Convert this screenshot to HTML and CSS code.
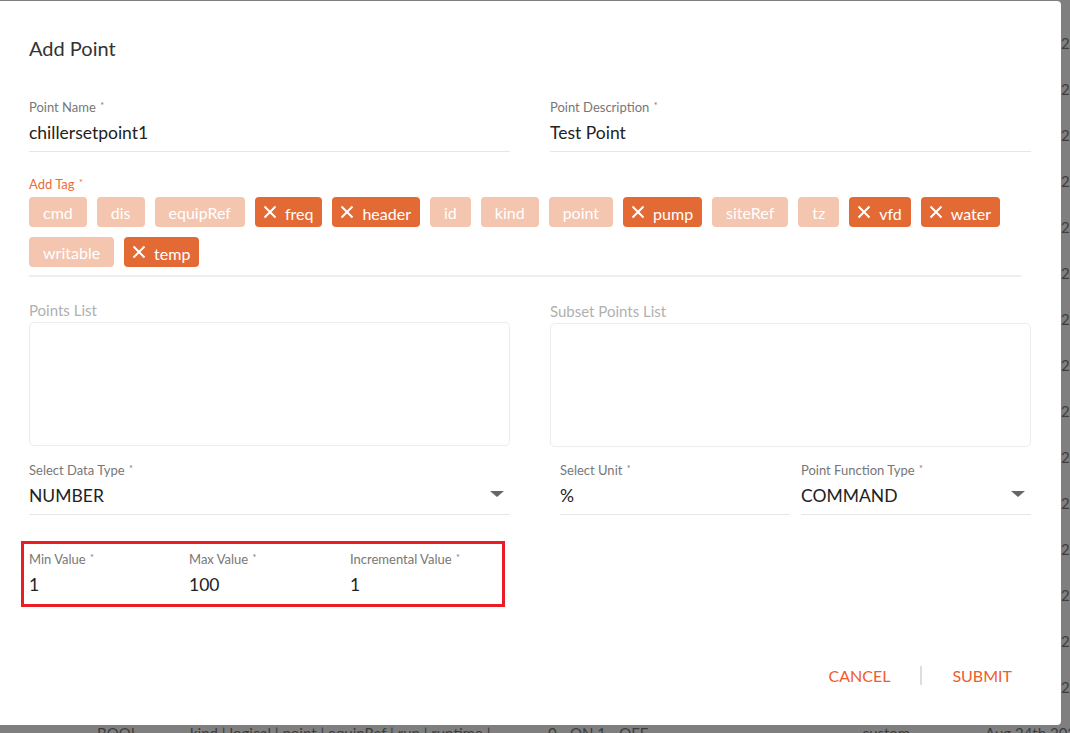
FILE: index.html
```html
<!DOCTYPE html>
<html lang="en">
<head>
    <meta charset="UTF-8">
    <meta name="viewport" content="width=device-width, initial-scale=1.0">
    <title>Add Point</title>
    <link rel="stylesheet" href="styles.css">
</head>
<body>
<div class="backdrop">
    <div class="bg-row"><span class="bg-date">2023</span></div>
    <div class="bg-row"><span class="bg-date">2023</span></div>
    <div class="bg-row"><span class="bg-date">2023</span></div>
    <div class="bg-row"><span class="bg-date">2023</span></div>
    <div class="bg-row"><span class="bg-date">2023</span></div>
    <div class="bg-row"><span class="bg-date">2023</span></div>
    <div class="bg-row"><span class="bg-date">2023</span></div>
    <div class="bg-row"><span class="bg-date">2023</span></div>
    <div class="bg-row"><span class="bg-date">2023</span></div>
    <div class="bg-row"><span class="bg-date">2023</span></div>
    <div class="bg-row"><span class="bg-date">2023</span></div>
    <div class="bg-row"><span class="bg-date">2023</span></div>
    <div class="bg-row"><span class="bg-date">2023</span></div>
    <div class="bg-row"><span class="bg-date">2023</span></div>
    <div class="bg-row"><span class="bg-date">2023</span></div>
    <div class="bg-row last"><span>BOOL</span><span>kind | logical | point | equipRef | run | runtime |</span><span>0 - ON 1 - OFF</span><span>custom</span><span>Aug 24th 2023</span></div>
</div>

<div class="dialog">
    <h2 class="dialog-title">Add Point</h2>

    <div class="row">
        <div class="field">
            <label>Point Name <sup>*</sup></label>
            <div class="value">chillersetpoint1</div>
        </div>
        <div class="field">
            <label>Point Description <sup>*</sup></label>
            <div class="value">Test Point</div>
        </div>
    </div>

    <div class="tags">
        <label class="tag-label">Add Tag <sup>*</sup></label>
        <div class="chips">
            <span class="chip">cmd</span>
            <span class="chip">dis</span>
            <span class="chip">equipRef</span>
            <span class="chip on"><svg viewBox="0 0 14 14"><path d="M1.5 1.5L12.5 12.5M12.5 1.5L1.5 12.5"/></svg>freq</span>
            <span class="chip on"><svg viewBox="0 0 14 14"><path d="M1.5 1.5L12.5 12.5M12.5 1.5L1.5 12.5"/></svg>header</span>
            <span class="chip">id</span>
            <span class="chip">kind</span>
            <span class="chip">point</span>
            <span class="chip on"><svg viewBox="0 0 14 14"><path d="M1.5 1.5L12.5 12.5M12.5 1.5L1.5 12.5"/></svg>pump</span>
            <span class="chip">siteRef</span>
            <span class="chip">tz</span>
            <span class="chip on"><svg viewBox="0 0 14 14"><path d="M1.5 1.5L12.5 12.5M12.5 1.5L1.5 12.5"/></svg>vfd</span>
            <span class="chip on"><svg viewBox="0 0 14 14"><path d="M1.5 1.5L12.5 12.5M12.5 1.5L1.5 12.5"/></svg>water</span>
            <span class="chip">writable</span>
            <span class="chip on"><svg viewBox="0 0 14 14"><path d="M1.5 1.5L12.5 12.5M12.5 1.5L1.5 12.5"/></svg>temp</span>
        </div>
    </div>

    <div class="row lists">
        <div class="list">
            <div class="list-label">Points List</div>
            <div class="list-box"></div>
        </div>
        <div class="list subset">
            <div class="list-label">Subset Points List</div>
            <div class="list-box"></div>
        </div>
    </div>

    <div class="row selects">
        <div class="field">
            <label>Select Data Type <sup>*</sup></label>
            <div class="value select">NUMBER<span class="arrow"></span></div>
        </div>
        <div class="pair">
            <div class="field">
                <label>Select Unit <sup>*</sup></label>
                <div class="value">%</div>
            </div>
            <div class="field">
                <label>Point Function Type <sup>*</sup></label>
                <div class="value select">COMMAND<span class="arrow"></span></div>
            </div>
        </div>
    </div>

    <div class="range">
        <div class="range-field">
            <label>Min Value <sup>*</sup></label>
            <div class="range-value">1</div>
        </div>
        <div class="range-field">
            <label>Max Value <sup>*</sup></label>
            <div class="range-value">100</div>
        </div>
        <div class="range-field">
            <label>Incremental Value <sup>*</sup></label>
            <div class="range-value">1</div>
        </div>
    </div>

    <div class="actions">
        <button class="btn">CANCEL</button>
        <span class="divider"></span>
        <button class="btn">SUBMIT</button>
    </div>
</div>
</body>
</html>
```

FILE: styles.css
```css
* {
    box-sizing: border-box;
    margin: 0;
    padding: 0;
}
body {
    font-family: Lato, "Open Sans", sans-serif;
    background-color: #7f7f7f;
    color: #222;
    width: 1070px;
    height: 733px;
    overflow: hidden;
}
.backdrop {
    height: 733px;
    overflow: hidden;
    padding-top: 34px;
}
.bg-row {
    display: grid;
    grid-template-columns: 97px 93px 358px 314px 123px 85px;
    height: 46px;
    overflow: hidden;
    font-size: 15px;
    color: #3d3d3d;
    white-space: nowrap;
}
.bg-row span {
    overflow: hidden;
}
.bg-row .bg-date {
    grid-column: 6;
    padding-left: 76px;
}
.bg-row.last span:first-child {
    grid-column: 2;
}
.dialog {
    position: absolute;
    top: 1px;
    left: 0;
    width: 1061px;
    height: 724px;
    background-color: #fff;
    border-radius: 0 4px 4px 0;
    padding: 0 30px 0 29px;
}
.dialog-title {
    font-size: 20px;
    font-weight: 400;
    line-height: 30px;
    padding-top: 32px;
    color: #333;
}
.row {
    display: grid;
    grid-template-columns: 1fr 1fr;
    gap: 40px;
    margin-top: 35px;
}
label {
    display: block;
    font-size: 13px;
    line-height: 16px;
    color: #777;
}
sup {
    font-size: 9px;
    vertical-align: 3px;
    margin-left: 1px;
}
.value {
    font-size: 17.5px;
    line-height: 24px;
    margin-top: 6px;
    padding-bottom: 6px;
    border-bottom: 1px solid #e6e6e6;
    color: #222;
}
.select {
    display: flex;
    justify-content: space-between;
}
.arrow {
    width: 0;
    height: 0;
    margin: 7px 6px 0 0;
    border-left: 7px solid transparent;
    border-right: 7px solid transparent;
    border-top: 6px solid #666;
}
.tags {
    margin-top: 23px;
    margin-right: 10px;
    padding-bottom: 8px;
    border-bottom: 2px solid #eee;
}
.tag-label {
    color: #ec6b3c;
}
.chips {
    display: flex;
    flex-wrap: wrap;
    gap: 10px;
    margin-top: 5px;
}
.chip {
    display: inline-flex;
    align-items: center;
    height: 30px;
    padding: 0 14px;
    border-radius: 4px;
    background-color: #f4c5af;
    color: #fff;
    font-size: 16px;
}
.chip.on {
    background-color: #e46a35;
    padding: 2px 9px 0 8px;
    gap: 8px;
}
.chip svg {
    width: 14px;
    height: 14px;
    margin-top: -3px;
    stroke: #fff;
    stroke-width: 2;
    fill: none;
}
.lists {
    margin-top: 24px;
}
.list-label {
    font-size: 15px;
    line-height: 18px;
    color: #b0b0b0;
}
.list-box {
    height: 124px;
    margin-top: 3px;
    border: 1px solid #ececec;
    border-radius: 5px;
}
.subset {
    padding-top: 1px;
}
.selects {
    margin-top: 14px;
}
.pair {
    display: grid;
    grid-template-columns: 1fr 1fr;
    gap: 11px;
    padding-left: 10px;
}
.range {
    display: grid;
    grid-template-columns: 160px 161px 1fr;
    width: 484px;
    margin: 26px 0 0 -8px;
    padding: 6px 5px 7px;
    border: 3px solid #ec1c24;
}
.range-value {
    font-size: 17.5px;
    line-height: 24px;
    margin-top: 6px;
}
.actions {
    display: flex;
    justify-content: flex-end;
    align-items: center;
    gap: 30px;
    height: 40px;
    margin-top: 48px;
    padding-right: 19px;
}
.btn {
    background: none;
    border: none;
    font-family: Lato, sans-serif;
    font-size: 16px;
    color: #ee5d2b;
    cursor: pointer;
}
.divider {
    width: 2px;
    height: 19px;
    background-color: #ddd;
}
```
